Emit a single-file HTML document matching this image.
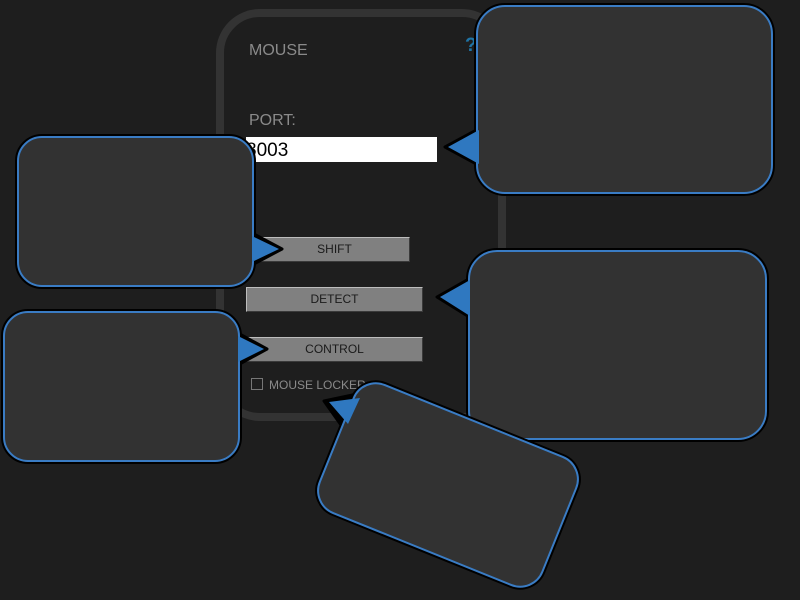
<!DOCTYPE html>
<html><head><meta charset="utf-8"><style>
html,body{margin:0;padding:0;background:#1e1e1e;width:800px;height:600px;overflow:hidden;font-family:"Liberation Sans",sans-serif}
.abs{position:absolute}
.panel{left:216px;top:9px;width:274px;height:396px;border:8px solid #333;border-radius:44px;background:#1e1e1e}
.lbl{color:#8a8a8a;font-size:16px}
.btn{background:#808080;border-top:1px solid #bdbdbd;border-left:1px solid #bdbdbd;border-right:1px solid #3a3a3a;border-bottom:1px solid #3a3a3a;box-sizing:border-box;font-size:12px;color:#1a1a1a;text-align:center;line-height:23px}
</style></head><body>
<div class="abs panel"></div>
<div class="abs lbl" style="left:249px;top:42px">MOUSE</div>
<div class="abs" style="left:465px;top:35px;color:#1f74a6;font-size:19px;font-weight:bold">?</div>
<div class="abs lbl" style="left:249px;top:112px">PORT:</div>
<div class="abs" style="left:246px;top:137px;width:191px;height:25px;background:#fff;font-size:19px;line-height:28px;color:#000;box-sizing:border-box">8003</div>
<div class="abs btn" style="left:259px;top:237px;width:151px;height:25px">SHIFT</div>
<div class="abs btn" style="left:246px;top:287px;width:177px;height:25px">DETECT</div>
<div class="abs btn" style="left:246px;top:337px;width:177px;height:25px">CONTROL</div>
<div class="abs" style="left:251px;top:378px;width:10px;height:10px;border:1px solid #777"></div>
<div class="abs" style="left:269px;top:378px;color:#8a8a8a;font-size:12px">MOUSE LOCKER</div>
<svg class="abs" style="left:0;top:0" width="800" height="600">
<g stroke-linejoin="round">
<!-- bubble 1 -->
<polygon points="482,127 445,147 482,167" fill="#000" stroke="#000" stroke-width="3"/>
<rect x="477" y="6" width="295" height="187" rx="28" fill="#000" stroke="#000" stroke-width="6"/>
<rect x="477" y="6" width="295" height="187" rx="28" fill="#323232" stroke="#3a7cc4" stroke-width="2"/>
<polygon points="479,130 448,147 479,164" fill="#2f78c0"/>
<!-- bubble 2 -->
<polygon points="250,232 282,249 250,266" fill="#000" stroke="#000" stroke-width="3"/>
<rect x="18" y="137" width="235" height="149" rx="24" fill="#000" stroke="#000" stroke-width="6"/>
<rect x="18" y="137" width="235" height="149" rx="24" fill="#323232" stroke="#3a7cc4" stroke-width="2"/>
<polygon points="252,236 279,249 252,262" fill="#2f78c0"/>
<!-- bubble 3 -->
<polygon points="474,276 437,297 474,320" fill="#000" stroke="#000" stroke-width="3"/>
<rect x="469" y="251" width="297" height="188" rx="28" fill="#000" stroke="#000" stroke-width="6"/>
<rect x="469" y="251" width="297" height="188" rx="28" fill="#323232" stroke="#3a7cc4" stroke-width="2"/>
<polygon points="470,280 440,297 470,316" fill="#2f78c0"/>
<!-- bubble 4 -->
<polygon points="236,332 267,349 236,366" fill="#000" stroke="#000" stroke-width="3"/>
<rect x="4" y="312" width="235" height="149" rx="24" fill="#000" stroke="#000" stroke-width="6"/>
<rect x="4" y="312" width="235" height="149" rx="24" fill="#323232" stroke="#3a7cc4" stroke-width="2"/>
<polygon points="238,336 264,349 238,362" fill="#2f78c0"/>
<!-- rotated bubble -->
<polygon points="324,401 362,393 346,432" fill="#000" stroke="#000" stroke-width="3"/>
<g transform="translate(448,485) rotate(22)">
<rect x="-120" y="-69" width="240" height="138" rx="24" fill="#000" stroke="#000" stroke-width="6"/>
<rect x="-120" y="-69" width="240" height="138" rx="24" fill="#323232" stroke="#3a7cc4" stroke-width="2"/>
</g>
<polygon points="329,402 360,398 348,424" fill="#2f78c0"/>
</g>
</svg>
</body></html>
